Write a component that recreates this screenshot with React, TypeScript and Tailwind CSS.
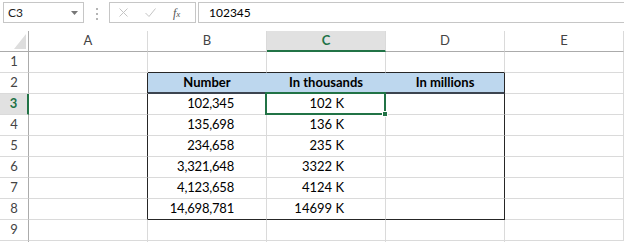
import { twMerge } from "tailwind-merge";

const GRID = "border-[#dadada]";

const ROWS: { n: number; b?: string; c?: string }[] = [
  { n: 1 },
  { n: 2, b: "Number", c: "In thousands" },
  { n: 3, b: "102,345", c: "102 K" },
  { n: 4, b: "135,698", c: "136 K" },
  { n: 5, b: "234,658", c: "235 K" },
  { n: 6, b: "3,321,648", c: "3322 K" },
  { n: 7, b: "4,123,658", c: "4124 K" },
  { n: 8, b: "14,698,781", c: "14699 K" },
  { n: 9 },
];

function Cell({
  className,
  children,
}: {
  className?: string;
  children?: React.ReactNode;
}) {
  return (
    <div
      className={twMerge(
        "relative box-border flex h-[21px] w-[119px] shrink-0 items-center border-r border-b border-[#dadada] text-[13px] text-black",
        className,
      )}
    >
      {children}
    </div>
  );
}

function FormulaBar() {
  return (
    <div className="flex h-[31px] items-start pt-[2px] text-[12px] text-[#222]">
      <div className="ml-[3px] box-border flex h-[21px] w-[81px] items-center justify-between border border-[#c6c6c6] pl-[4px] pr-[5px]">
        <span>C3</span>
        <svg width="7" height="4" viewBox="0 0 7 4">
          <path d="M0 0h7L3.5 4z" fill="#777" />
        </svg>
      </div>
      <div className="ml-[12px] mt-[6px] flex flex-col gap-[3px]">
        <span className="h-[2px] w-[2px] bg-[#b5b5b5]" />
        <span className="h-[2px] w-[2px] bg-[#b5b5b5]" />
        <span className="h-[2px] w-[2px] bg-[#b5b5b5]" />
      </div>
      <div className="ml-[11px] box-border flex h-[21px] w-[87px] items-center border border-[#c6c6c6]">
        <svg className="ml-[9px]" width="9" height="9" viewBox="0 0 9 9">
          <path d="M0.5 0.5l8 8M8.5 0.5l-8 8" stroke="#c4c4c4" strokeWidth="1" />
        </svg>
        <svg className="ml-[17px]" width="11" height="9" viewBox="0 0 11 9">
          <path d="M0.5 5l3.5 3.5L10.5 0.5" stroke="#c4c4c4" strokeWidth="1" fill="none" />
        </svg>
        <span className="ml-[17px] font-['Liberation_Serif',serif] text-[12px] italic text-[#555]">
          f<span className="text-[9px]">x</span>
        </span>
      </div>
      <div className="ml-[2px] box-border flex h-[21px] flex-1 items-center border border-r-0 border-[#c6c6c6] pl-[10px] text-[12px] text-black">
        102345
      </div>
    </div>
  );
}

function HeaderRow() {
  return (
    <div className="flex text-[#444]">
      <div className="box-border flex h-[21px] w-[29px] shrink-0 items-end justify-end border-r border-b border-[#ababab] pb-[2px] pr-[2px]">
        <svg width="12" height="15" viewBox="0 0 12 15">
          <path d="M12 0v15H0z" fill="#dedede" />
        </svg>
      </div>
      {["A", "B", "C", "D", "E"].map((k) => (
        <Cell
          key={k}
          className={twMerge(
            "justify-center border-b-[#ababab] text-[13px] text-[#444]",
            k === "C" &&
              "border-b-2 border-b-[#217346] bg-[#e1e1e1] font-bold text-[#217346]",
          )}
        >
          {k}
        </Cell>
      ))}
    </div>
  );
}

function DataRow({ n, b, c }: { n: number; b?: string; c?: string }) {
  const inTable = n >= 2 && n <= 8;
  const head = n === 2;
  const sel = n === 3;
  return (
    <div className="flex">
      <div
        className={twMerge(
          "box-border flex h-[21px] w-[29px] shrink-0 items-center justify-center border-r border-b border-r-[#ababab] border-b-[#dadada] text-[13px] text-[#444]",
          sel && "border-r-2 border-r-[#217346] bg-[#e1e1e1] font-bold text-[#217346]",
        )}
      >
        {n}
      </div>
      <Cell className={twMerge(inTable && "border-r-[#262626]")} />
      <Cell
        className={twMerge(
          n === 1 && "border-b-[#262626]",
          inTable && "justify-end pr-[32px] tracking-[-0.2px]",
          head && "justify-center border-b-2 border-b-[#3c4450] border-r-[#bdd7ee] bg-[#bdd7ee] pr-0 font-bold tracking-normal",
          n === 8 && "border-b-[#262626]",
        )}
      >
        {b}
      </Cell>
      <Cell
        className={twMerge(
          n === 1 && "border-b-[#262626]",
          inTable && "justify-end pr-[41px]",
          head && "justify-center border-b-2 border-b-[#3c4450] border-r-[#bdd7ee] bg-[#bdd7ee] pr-0 font-bold",
          n === 8 && "border-b-[#262626]",
        )}
      >
        {c}
        {sel && (
          <div className="absolute -top-[2px] -bottom-[1px] -left-[2px] -right-[1px] z-10 box-border border-2 border-[#217346]">
            <div className="absolute -right-[4px] -bottom-[4px] box-border h-[6px] w-[6px] border border-white bg-[#217346]" />
          </div>
        )}
      </Cell>
      <Cell
        className={twMerge(
          n === 1 && "border-b-[#262626]",
          inTable && "border-r-[#262626]",
          head && "justify-center border-b-2 border-b-[#3c4450] bg-[#bdd7ee] font-bold",
          n === 8 && "border-b-[#262626]",
        )}
      >
        {head ? "In millions" : null}
      </Cell>
      <Cell className={GRID} />
    </div>
  );
}

export default function App() {
  return (
    <div className="h-[242px] w-[624px] overflow-hidden bg-white font-['Lato',sans-serif]">
      <FormulaBar />
      <HeaderRow />
      {ROWS.map((r) => (
        <DataRow key={r.n} {...r} />
      ))}
      <div className="flex h-[1px]">
        <div className="w-[29px] border-r border-[#ababab]" />
        <div className="w-[119px] border-r border-[#dadada]" />
        <div className="w-[119px] border-r border-[#dadada]" />
        <div className="w-[119px] border-r border-[#dadada]" />
        <div className="w-[119px] border-r border-[#dadada]" />
      </div>
    </div>
  );
}
